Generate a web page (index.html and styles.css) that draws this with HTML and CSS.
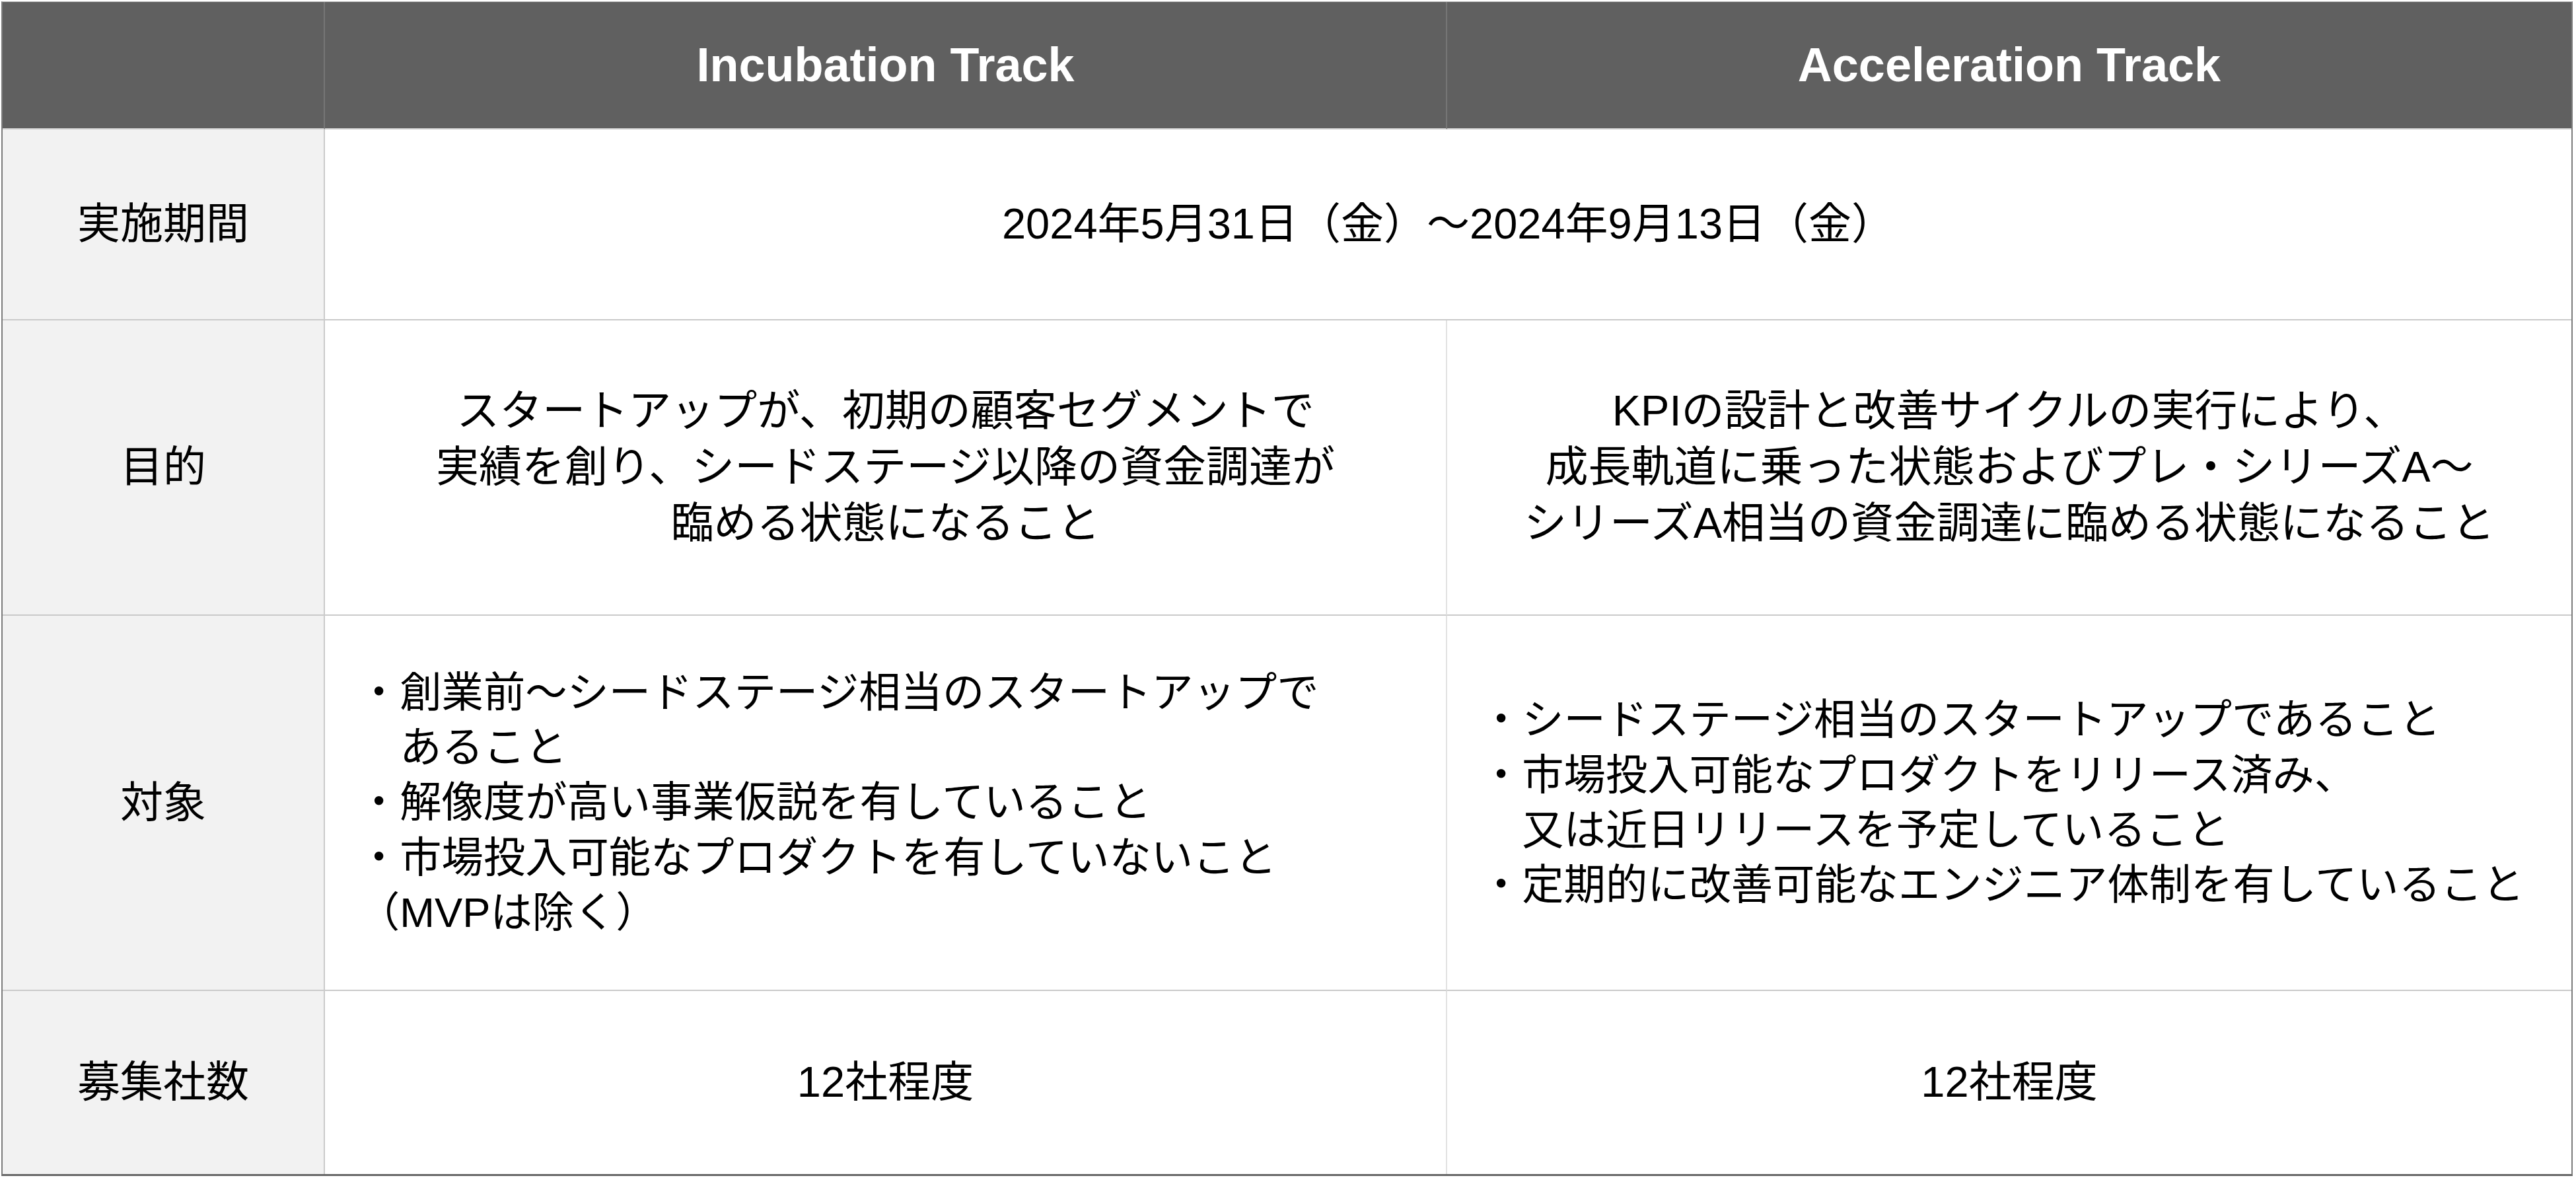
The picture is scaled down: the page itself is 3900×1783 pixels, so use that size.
FILE: index.html
```html
<!DOCTYPE html>
<html lang="ja">
<head>
<meta charset="utf-8">
<title>Track Comparison</title>
<link rel="stylesheet" href="styles.css">
</head>
<body>
<div class="table">
  <div class="cell head corner"></div>
  <div class="cell head">Incubation Track</div>
  <div class="cell head last">Acceleration Track</div>

  <div class="cell label">実施期間</div>
  <div class="cell body span last">2024年5月31日（金）〜2024年9月13日（金）</div>

  <div class="cell label">目的</div>
  <div class="cell body">スタートアップが、初期の顧客セグメントで<br>実績を創り、シードステージ以降の資金調達が<br>臨める状態になること</div>
  <div class="cell body last">KPIの設計と改善サイクルの実行により、<br>成長軌道に乗った状態およびプレ・シリーズA〜<br>シリーズA相当の資金調達に臨める状態になること</div>

  <div class="cell label">対象</div>
  <div class="cell body list">
    <ul class="items">
      <li>・創業前〜シードステージ相当のスタートアップで<br>あること</li>
      <li>・解像度が高い事業仮説を有していること</li>
      <li>・市場投入可能なプロダクトを有していないこと<span class="note">（MVPは除く）</span></li>
    </ul>
  </div>
  <div class="cell body list last">
    <ul class="items">
      <li>・シードステージ相当のスタートアップであること</li>
      <li>・市場投入可能なプロダクトをリリース済み、<br>又は近日リリースを予定していること</li>
      <li>・定期的に改善可能なエンジニア体制を有していること</li>
    </ul>
  </div>

  <div class="cell label bottom">募集社数</div>
  <div class="cell body bottom">12社程度</div>
  <div class="cell body bottom last">12社程度</div>
</div>
</body>
</html>
```
FILE: styles.css
```css
html, body {
  margin: 0;
  padding: 0;
  background: #ffffff;
}

body {
  font-family: "Liberation Sans", "Noto Sans CJK JP", sans-serif;
  color: #000000;
}

.table {
  box-sizing: border-box;
  margin: 2px 0 0 2px;
  width: 3893px;
  display: grid;
  grid-template-columns: 488px 1699px 1fr;
  grid-template-rows: 193px 289px 447px 568px 277px;
  border-top: 1px solid #c4c4c4;
  border-left: 2px solid #7c7c7c;
  border-right: 2px solid #7c7c7c;
  border-bottom: 3px solid #666666;
}

.cell {
  box-sizing: border-box;
  display: flex;
  align-items: center;
  justify-content: center;
  text-align: center;
  font-size: 65px;
  line-height: 84.8px;
  border-right: 2px solid #e2e2e2;
  border-bottom: 2px solid #cacaca;
  white-space: nowrap;
}

.cell.last {
  border-right: none;
}

.cell.bottom {
  border-bottom: none;
}

.head {
  background: #606060;
  color: #ffffff;
  font-weight: bold;
  font-size: 72px;
  line-height: 1.15;
  border-right: 2px solid #767676;
  border-bottom: 2px solid #cfcfcf;
}

.label {
  background: #f2f2f2;
  border-right: 2px solid #cacaca;
}

.span {
  grid-column: 2 / 4;
}

.list {
  justify-content: flex-start;
  text-align: left;
  padding-left: 50px;
  font-size: 63.3px;
  line-height: 83.3px;
}

.items {
  list-style: none;
  margin: 0;
  padding: 0 0 0 1em;
}

.items li {
  text-indent: -1em;
}

.note {
  display: block;
  margin-left: -1em;
  text-indent: 0;
}
```
